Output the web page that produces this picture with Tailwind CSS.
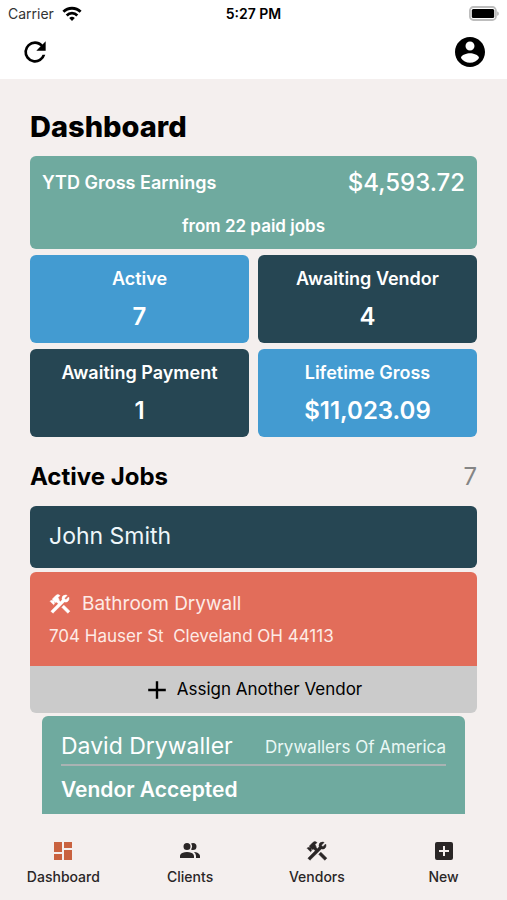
<!DOCTYPE html>
<html lang="en">
  <head>
    <meta charset="UTF-8" />
    <meta name="viewport" content="width=device-width, initial-scale=1.0" />
    <title>Dashboard</title>
    <script src="https://cdn.jsdelivr.net/npm/@tailwindcss/browser@4"></script>
  </head>
  <body
    class="flex flex-col h-screen bg-[#f4efee] text-black font-['Inter','Liberation_Sans',sans-serif]"
  >
    <!-- status bar -->
    <div class="grid grid-cols-3 items-center h-7 px-2 bg-white text-sm">
      <div class="flex items-center gap-2 text-[#333]">
        <span>Carrier</span>
        <svg class="w-5 h-4 text-black" viewBox="0 0 20 16" fill="none" stroke="currentColor" stroke-width="2.8">
          <path d="M1.4 5.8a12.2 12.2 0 0 1 17.2 0" />
          <path d="M4.7 9.4a7.5 7.5 0 0 1 10.6 0" />
          <path d="M10 15 7.2 12a4 4 0 0 1 5.6 0z" fill="currentColor" stroke="none" />
        </svg>
      </div>
      <span class="text-center font-semibold">5:27 PM</span>
      <svg class="justify-self-end w-[30px] h-4" viewBox="0 0 30 16">
        <rect x="0.9" y="1" width="26" height="13" rx="3.5" fill="#fff" stroke="#bdbdbd" stroke-width="1.8" />
        <rect x="2.8" y="2.9" width="22.4" height="9.2" rx="1.5" fill="#000" />
        <path d="M28.4 5.4c1.6.6 1.6 3.8 0 4.4z" fill="#999" />
      </svg>
    </div>

    <header class="flex items-center justify-between px-[19px] pb-1 h-[51px] bg-white">
      <button type="button" aria-label="Refresh">
        <svg class="w-8 h-8" viewBox="0 0 24 24" fill="currentColor">
          <path d="M17.65 6.35A7.96 7.96 0 0 0 12 4a8 8 0 1 0 7.73 10h-2.08A6 6 0 1 1 12 6c1.66 0 3.14.69 4.22 1.78L13 11h7V4l-2.35 2.35z" />
        </svg>
      </button>
      <button type="button" aria-label="Account">
        <svg class="w-9 h-9" viewBox="0 0 24 24" fill="currentColor">
          <path d="M12 2C6.48 2 2 6.48 2 12s4.48 10 10 10 10-4.48 10-10S17.52 2 12 2zm0 3c1.66 0 3 1.34 3 3s-1.34 3-3 3-3-1.34-3-3 1.34-3 3-3zm0 14.2c-2.5 0-4.71-1.28-6-3.22.03-1.99 4-3.08 6-3.08 1.99 0 5.97 1.09 6 3.08-1.29 1.94-3.5 3.22-6 3.22z" />
        </svg>
      </button>
    </header>

    <main class="flex-1 min-h-0 overflow-y-auto [scrollbar-width:none] px-[30px] pt-7">
      <h1 class="text-[29px] leading-10 font-extrabold">Dashboard</h1>

      <section class="mt-[9px] px-3 pt-2 pb-[7px] rounded-md bg-[#6faa9f] text-white font-semibold">
        <div class="flex items-center justify-between h-[38px]">
          <h2 class="text-lg">YTD Gross Earnings</h2>
          <span class="text-2xl font-medium">$4,593.72</span>
        </div>
        <p class="mt-2 h-8 leading-8 text-center text-[17px]">from 22 paid jobs</p>
      </section>

      <section class="grid grid-cols-2 gap-x-[9px] gap-y-1.5 mt-1.5 text-white text-center font-semibold">
        <div class="h-[88px] pt-2.5 rounded-md bg-[#439bd1]">
          <h2 class="text-lg leading-7">Active</h2>
          <p class="mt-2 text-2xl leading-8">7</p>
        </div>
        <div class="h-[88px] pt-2.5 rounded-md bg-[#264653]">
          <h2 class="text-lg leading-7">Awaiting Vendor</h2>
          <p class="mt-2 text-2xl leading-8">4</p>
        </div>
        <div class="h-[88px] pt-2.5 rounded-md bg-[#264653]">
          <h2 class="text-lg leading-7">Awaiting Payment</h2>
          <p class="mt-2 text-2xl leading-8">1</p>
        </div>
        <div class="h-[88px] pt-2.5 rounded-md bg-[#439bd1]">
          <h2 class="text-lg leading-7">Lifetime Gross</h2>
          <p class="mt-2 text-2xl leading-8">$11,023.09</p>
        </div>
      </section>

      <div class="flex items-center justify-between mt-6 h-8 text-2xl">
        <h2 class="font-bold">Active Jobs</h2>
        <span class="text-[#858585]">7</span>
      </div>

      <section class="mt-[13px]">
        <h3 class="h-[62px] px-[19px] leading-[61px] rounded-md bg-[#264653] text-[#eef6fa] text-[23px]">
          John Smith
        </h3>

        <article class="mt-1 rounded-md overflow-hidden">
          <div class="h-[94px] px-[19px] pt-[18px] bg-[#e26d5a] text-[#fdebe6]">
            <div class="flex items-center gap-2.5 h-7 text-[19px]">
              <svg class="w-6 h-6 -ml-px text-white" viewBox="0 0 24 24" fill="currentColor" stroke="currentColor" stroke-width="0.5">
                <path d="M13.78 15.3l6 6 2.11-2.16-6-6-2.11 2.16M17.5 10.1c-.39 0-.81-.05-1.14-.19L4.97 21.25l-2.11-2.11 7.41-7.4L8.5 9.96l-.72.7-1.45-1.41v2.86l-.7.7-3.52-3.56.7-.7h2.81l-1.4-1.41 3.56-3.56a2.976 2.976 0 0 1 4.22 0L9.89 5.74l1.41 1.4-.71.71 1.79 1.78 1.82-1.88c-.14-.33-.2-.75-.2-1.12a3.49 3.49 0 0 1 3.5-3.52c.59 0 1.11.14 1.58.42L16.41 6.2l1.5 1.5 2.67-2.67c.28.47.42.97.42 1.6 0 1.92-1.55 3.47-3.5 3.47z" />
              </svg>
              <h4>Bathroom Drywall</h4>
            </div>
            <p class="mt-1 text-[17px] leading-7 whitespace-pre">704 Hauser St  Cleveland OH 44113</p>
          </div>
          <button type="button" class="flex items-center justify-center gap-2 w-full h-[47px] bg-[#cbcbcb] text-[17px]">
            <svg class="w-6 h-6" viewBox="0 0 24 24" fill="none" stroke="currentColor" stroke-width="2.4">
              <path d="M12 3.2v17.6M3.2 12h17.6" />
            </svg>
            Assign Another Vendor
          </button>
        </article>

        <article class="mt-[3px] mx-3 px-[19px] pt-4 pb-6 rounded-md bg-[#6faa9f] text-white">
          <div class="flex items-center justify-between h-[34px] pb-1 border-b-2 border-[#a9b3b3]">
            <h4 class="text-[23px]">David Drywaller</h4>
            <span class="pt-1 text-[17px] text-[#eaf8f5]">Drywallers Of America</span>
          </div>
          <p class="mt-2 text-[21px] leading-8 font-semibold">Vendor Accepted</p>
        </article>
      </section>
    </main>

    <nav class="grid grid-cols-4 h-[86px] pt-[25px] text-center text-sm font-medium text-[#2a2626]">
      <a href="#dashboard" class="flex flex-col items-center gap-1">
        <svg class="w-6 h-6 text-[#c9623f]" viewBox="0 0 24 24" fill="currentColor">
          <path d="M3 13h8V3H3v10zm0 8h8v-6H3v6zm10 0h8V11h-8v10zm0-18v6h8V3h-8z" />
        </svg>
        Dashboard
      </a>
      <a href="#clients" class="flex flex-col items-center gap-1">
        <svg class="w-6 h-6" viewBox="0 0 24 24" fill="currentColor">
          <path d="M16 17v2H2v-2s0-4 7-4 7 4 7 4m-3.5-9.5A3.5 3.5 0 1 0 9 11a3.5 3.5 0 0 0 3.5-3.5m3.44 5.5A5.32 5.32 0 0 1 18 17v2h4v-2s0-3.63-6.06-4M15 4a3.39 3.39 0 0 0-1.93.59 5 5 0 0 1 0 5.82A3.39 3.39 0 0 0 15 11a3.5 3.5 0 0 0 0-7z" />
        </svg>
        Clients
      </a>
      <a href="#vendors" class="flex flex-col items-center gap-1">
        <svg class="w-6 h-6" viewBox="0 0 24 24" fill="currentColor" stroke="currentColor" stroke-width="0.5">
          <path d="M13.78 15.3l6 6 2.11-2.16-6-6-2.11 2.16M17.5 10.1c-.39 0-.81-.05-1.14-.19L4.97 21.25l-2.11-2.11 7.41-7.4L8.5 9.96l-.72.7-1.45-1.41v2.86l-.7.7-3.52-3.56.7-.7h2.81l-1.4-1.41 3.56-3.56a2.976 2.976 0 0 1 4.22 0L9.89 5.74l1.41 1.4-.71.71 1.79 1.78 1.82-1.88c-.14-.33-.2-.75-.2-1.12a3.49 3.49 0 0 1 3.5-3.52c.59 0 1.11.14 1.58.42L16.41 6.2l1.5 1.5 2.67-2.67c.28.47.42.97.42 1.6 0 1.92-1.55 3.47-3.5 3.47z" />
        </svg>
        Vendors
      </a>
      <a href="#new" class="flex flex-col items-center gap-1">
        <svg class="w-6 h-6" viewBox="0 0 24 24" fill="currentColor">
          <path d="M17 13h-4v4h-2v-4H7v-2h4V7h2v4h4m2-8H5a2 2 0 0 0-2 2v14a2 2 0 0 0 2 2h14a2 2 0 0 0 2-2V5a2 2 0 0 0-2-2z" />
        </svg>
        New
      </a>
    </nav>
  </body>
</html>
